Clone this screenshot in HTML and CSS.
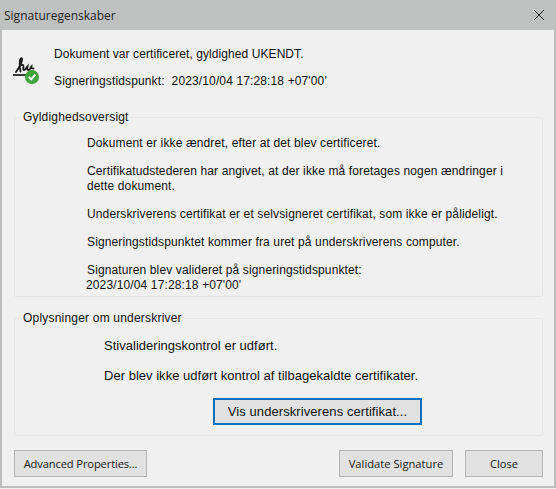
FILE: index.html
```html
<!DOCTYPE html>
<html lang="da">
<head>
<meta charset="utf-8">
<title>Signaturegenskaber</title>
<link rel="stylesheet" href="styles.css">
</head>
<body>
<div class="dialog">
  <header class="titlebar">
    <span class="title">Signaturegenskaber</span>
    <svg class="close" width="12" height="12" viewBox="0 0 12 12"><path d="M1 1L11 11M11 1L1 11" stroke="#222" stroke-width="1" fill="none"/></svg>
  </header>
  <main class="content">
    <section class="summary">
      <svg class="sigicon" width="30" height="32" viewBox="0 0 30 32">
        <path d="M4 17C7 13 9.500 8 10 5C10.500 2.500 8.500 2.500 8 5C7.500 8 7.500 12 8.500 16.500M8 11C10 9.500 11.500 9.500 11.500 11C11.500 13 10.500 15 12 15C13.500 15 14.500 12.500 15.500 11.500C15 13.500 15 15 16.500 15C18 15 18.500 12.500 19.500 11.500C19.500 13 20 14 21.500 13.500" stroke="#1a1a1a" stroke-width="1.800" fill="none" stroke-linecap="round"/>
        <rect x="1" y="19" width="16" height="2" fill="#3a3a3a"/>
        <circle cx="20" cy="22" r="7" fill="#3fa33b"/>
        <path d="M16.800 22L19.200 24.400L23.400 19.600" stroke="#fff" stroke-width="2" fill="none"/>
      </svg>
      <div class="summary-text">
        <p class="doc-line">Dokument var certificeret, gyldighed UKENDT.</p>
        <p>Signeringstidspunkt:&nbsp; 2023/10/04 17:28:18 +07'00'</p>
      </div>
    </section>
    <fieldset class="group validity">
      <legend>Gyldighedsoversigt</legend>
      <p>Dokument er ikke ændret, efter at det blev certificeret.</p>
      <p>Certifikatudstederen har angivet, at der ikke må foretages nogen ændringer i dette dokument.</p>
      <p>Underskriverens certifikat er et selvsigneret certifikat, som ikke er pålideligt.</p>
      <p>Signeringstidspunktet kommer fra uret på underskriverens computer.</p>
      <p>Signaturen blev valideret på signeringstidspunktet:<br><span class="date">2023/10/04 17:28:18 +07'00'</span></p>
    </fieldset>
    <fieldset class="group signer">
      <legend>Oplysninger om underskriver</legend>
      <p>Stivalideringskontrol er udført.</p>
      <p>Der blev ikke udført kontrol af tilbagekaldte certifikater.</p>
      <div class="cert-row"><button class="btn-cert" type="button">Vis underskriverens certifikat...</button></div>
    </fieldset>
    <footer class="actions">
      <button class="btn btn-advanced" type="button">Advanced Properties...</button>
      <span class="spacer"></span>
      <button class="btn btn-validate" type="button">Validate Signature</button>
      <button class="btn btn-close" type="button">Close</button>
    </footer>
  </main>
</div>
</body>
</html>
```
FILE: styles.css
```css
html, body { margin: 0; padding: 0; background: #f0f0f0; }
body { width: 556px; height: 489px; overflow: hidden; font-family: "Liberation Sans", Arial, sans-serif; font-size: 12px; letter-spacing: 0.13px; color: #111; }
.dialog { width: 556px; height: 488px; box-sizing: border-box; border-left: 2px solid #bdbdbd; border-right: 2px solid #bdbdbd; border-bottom: 2px solid #bdbdbd; background: #f0f0f0; display: flex; flex-direction: column; }
.titlebar { height: 30px; margin: 0 -2px; background: #bfc1c0; display: flex; align-items: center; justify-content: space-between; padding: 0 11px 0 4px; flex: none; }
.title { font-family: "Open Sans", sans-serif; font-size: 12px; letter-spacing: 0; color: #222; }
.content { flex: 1; padding: 0 11px 0 12px; display: flex; flex-direction: column; }
p { margin: 0; }
.summary { position: relative; height: 79px; flex: none; }
.sigicon { position: absolute; left: -2px; top: 25px; }
.summary-text { padding: 16px 0 0 40px; }
.summary-text p { line-height: 16px; margin-bottom: 11px; }
.summary-text .doc-line { letter-spacing: 0.08px; }
.group { margin: 0; padding: 0; border: 1px solid #e6e6e6; border-radius: 2px; min-inline-size: 0; }
.group legend { padding: 0 2px 0 3px; line-height: 16px; letter-spacing: 0.2px; }
.validity { height: 188px; box-sizing: border-box; padding: 11px 30px 0 72px; flex: none; }
.validity legend { margin-left: -67px; }
.validity p { line-height: 14.250px; margin-bottom: 14px; }
.validity .date { margin-left: -1px; }
.signer { margin-top: 13px; height: 126px; box-sizing: border-box; padding: 12px 0 0 89px; flex: none; }
.signer legend { margin-left: -84px; }
.signer p { font-size: 13px; letter-spacing: 0.02px; line-height: 15px; margin-bottom: 15px; }
.cert-row { padding-left: 109px; }
button { font-family: "Open Sans", sans-serif; font-size: 11.200px; color: #1a1a1a; cursor: default; padding: 0; }
.btn-cert { font-family: "Liberation Sans", sans-serif; font-size: 13px; letter-spacing: 0.08px; width: 209px; height: 27px; background: #e1e1e1; border: 2px solid #0d6fc0; color: #111; }
.actions { margin-top: 14px; display: flex; gap: 12px; flex: none; }
.spacer { flex: 1; }
.btn { height: 27px; background: #e1e1e1; border: 1px solid #b4b4b4; }
.btn-advanced { width: 133px; letter-spacing: -0.150px; }
.btn-validate { width: 114px; }
.btn-close { width: 78px; }
```
